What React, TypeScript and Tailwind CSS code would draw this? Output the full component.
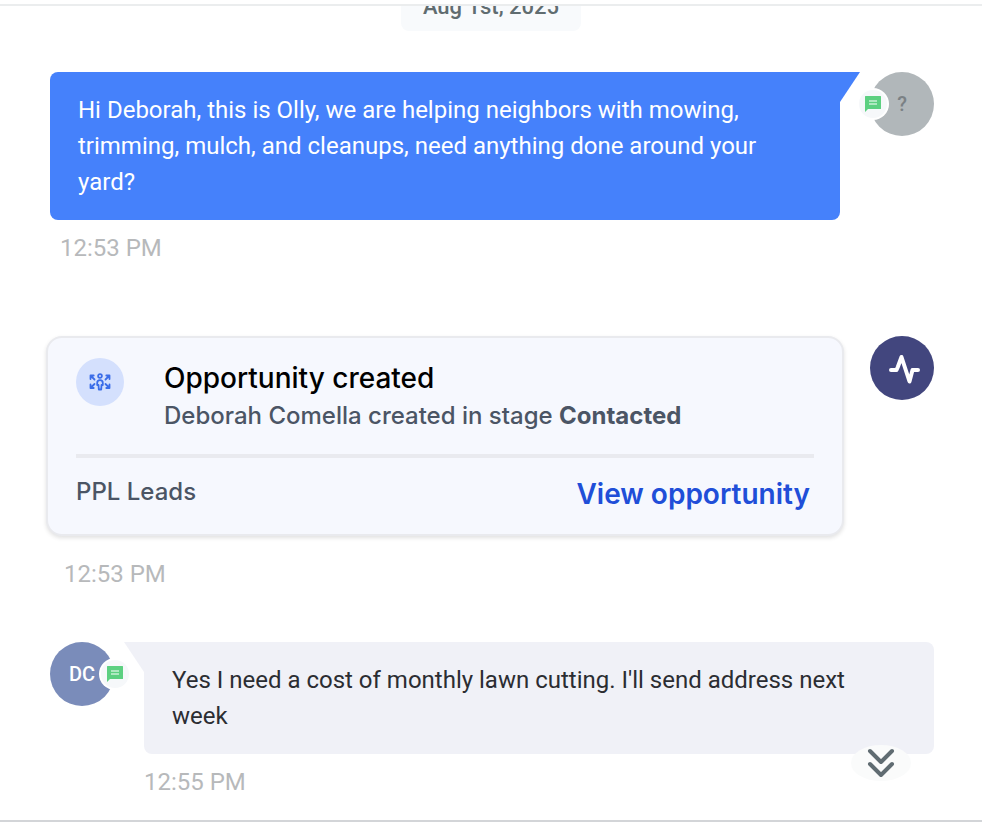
import type { ReactNode } from "react";

function SmsBadge() {
  return (
    <span className="absolute top-4 grid h-8 w-8 place-items-center rounded-full bg-white group-data-[side=left]:left-[49px] group-data-[side=right]:-left-[13px]">
      <span className="grid h-7 w-7 place-items-center rounded-full bg-[#f6f8fa]">
        <svg viewBox="0 0 16 16" className="h-4 w-4" aria-hidden="true">
          <path d="M.5 0h15a.5.5 0 0 1 .5.5v12a.5.5 0 0 1-.5.5H3L0 16V.5A.5.5 0 0 1 .5 0Z" fill="#5dd081" />
          <path d="M4 5h8M4 8h8" stroke="#fff" strokeWidth="1.2" />
        </svg>
      </span>
    </span>
  );
}

function Avatar({ side, className, children }: { side: "left" | "right"; className: string; children: ReactNode }) {
  return (
    <div
      data-side={side}
      className={`group relative grid h-16 w-16 shrink-0 place-items-center rounded-full text-xl font-medium ${className}`}
    >
      {children}
      <SmsBadge />
    </div>
  );
}

function PeopleArrows() {
  return (
    <svg
      viewBox="0 0 24 20"
      className="h-5 w-6"
      fill="none"
      stroke="#3b6de8"
      strokeWidth="1.8"
      strokeLinecap="round"
      strokeLinejoin="round"
      aria-hidden="true"
    >
      <circle cx="12" cy="4" r="1.9" />
      <path d="M12 8.200c-1.800 0-2.800 1.100-2.800 2.800v2h1.300l.3 4.500h2.400l.3-4.500h1.300v-2c0-1.700-1-2.800-2.800-2.800Z" />
      <path d="M2.500 7V3.500h3.200M2.500 3.500l4 4M21.500 7V3.500h-3.200M21.500 3.500l-4 4M2.500 12.500v3.500h3.200M2.500 16l4-4M21.500 12.500v3.500h-3.200M21.500 16l-4-4" />
    </svg>
  );
}

function OpportunityCard() {
  return (
    <article className="min-w-0 flex-1 rounded-2xl border-2 border-[#e9eaee] bg-[#f6f8fe] px-7 py-5 font-[Inter,sans-serif] shadow-[0_2px_4px_rgba(0,0,0,0.12)]">
      <div className="flex gap-10 border-b-4 border-[#e9eaef] pb-5">
        <span className="grid h-12 w-12 shrink-0 place-items-center rounded-full bg-[#d4e0fd]">
          <PeopleArrows />
        </span>
        <div>
          <h2 className="text-[28px] leading-10 font-medium text-black">Opportunity created</h2>
          <p className="text-2xl leading-9 font-medium text-[#4b5565]">
            Deborah Comella created in stage <strong className="font-bold">Contacted</strong>
          </p>
        </div>
      </div>
      <div className="flex items-start justify-between pt-4 pr-1">
        <span className="text-2xl leading-9 font-medium text-[#4b5565]">PPL Leads</span>
        <a href="#opportunity" className="text-[28px] leading-10 font-semibold text-[#204ed8]">
          View opportunity
        </a>
      </div>
    </article>
  );
}

export default function App() {
  return (
    <div className="bg-white font-[Roboto,sans-serif] text-2xl">
      <header className="h-1.5 border-b-2 border-[#ebedee]" />
      <main className="relative border-b-2 border-[#d3d5d8] pb-5">
        <div className="flex h-[25px] items-end justify-center overflow-hidden">
          <time className="h-12 rounded-lg bg-[#f8fafc] px-[22px] pt-2 text-[22px] leading-8 font-medium text-[#606c70]">
            Aug 1st, 2025
          </time>
        </div>

        <section className="mt-[41px] pr-12 pl-[50px]">
          <div className="flex gap-[30px]">
            <div className="relative min-w-0 flex-1 rounded-lg rounded-tr-none bg-[#4581fb] px-7 py-5 leading-9 text-white">
              Hi Deborah, this is Olly, we are helping neighbors with mowing, trimming, mulch, and cleanups, need
              anything done around your yard?
              <span className="absolute top-0 left-full h-[30px] w-5 bg-[#4581fb] [clip-path:polygon(0_0,100%_0,0_100%)]" />
            </div>
            <Avatar side="right" className="bg-[#b1b7ba] text-[#7b8185]">
              ?
            </Avatar>
          </div>
          <p className="mt-2.5 pl-2.5 leading-9 text-[#b7b9bb]">12:53 PM</p>
        </section>

        <section className="mt-[70px] pr-12 pl-[46px]">
          <div className="flex gap-[26px]">
            <OpportunityCard />
            <div className="grid h-16 w-16 shrink-0 place-items-center rounded-full bg-[#42467e]">
              <svg
                viewBox="0 0 36 32"
                className="h-8 w-9"
                fill="none"
                stroke="#fff"
                strokeWidth="4"
                strokeLinecap="round"
                strokeLinejoin="round"
                aria-hidden="true"
              >
                <path d="M7 18h5.500l1.300-3L17.500 5l8 24.500 3-11.500H34" />
              </svg>
            </div>
          </div>
          <p className="mt-5 pl-[18px] leading-9 text-[#b7b9bb]">12:53 PM</p>
        </section>

        <section className="mt-[50px] pr-12 pl-[50px]">
          <div className="flex gap-[30px]">
            <Avatar side="left" className="bg-[#7a8cba] text-white">
              DC
            </Avatar>
            <div className="relative min-w-0 flex-1 rounded-lg rounded-tl-none bg-[#f0f1f7] px-7 py-5 leading-9 text-[#2b2d32]">
              Yes I need a cost of monthly lawn cutting. I'll send address next week
              <span className="absolute top-0 right-full h-[30px] w-5 bg-[#f0f1f7] [clip-path:polygon(0_0,100%_0,100%_100%)]" />
            </div>
          </div>
          <p className="mt-2.5 pl-[94px] leading-9 text-[#b7b9bb]">12:55 PM</p>
        </section>

        <button
          aria-label="Scroll to latest"
          className="absolute right-[71px] bottom-[39px] grid h-9 w-[60px] place-items-center rounded-[50%] bg-[#fafbfb]"
        >
          <svg
            viewBox="0 0 28 30"
            className="h-[30px] w-7"
            fill="none"
            stroke="#606c72"
            strokeWidth="4"
            strokeLinecap="round"
            strokeLinejoin="round"
            aria-hidden="true"
          >
            <path d="m3 3 11 11L25 3M3 16l11 11 11-11" />
          </svg>
        </button>
      </main>
    </div>
  );
}
